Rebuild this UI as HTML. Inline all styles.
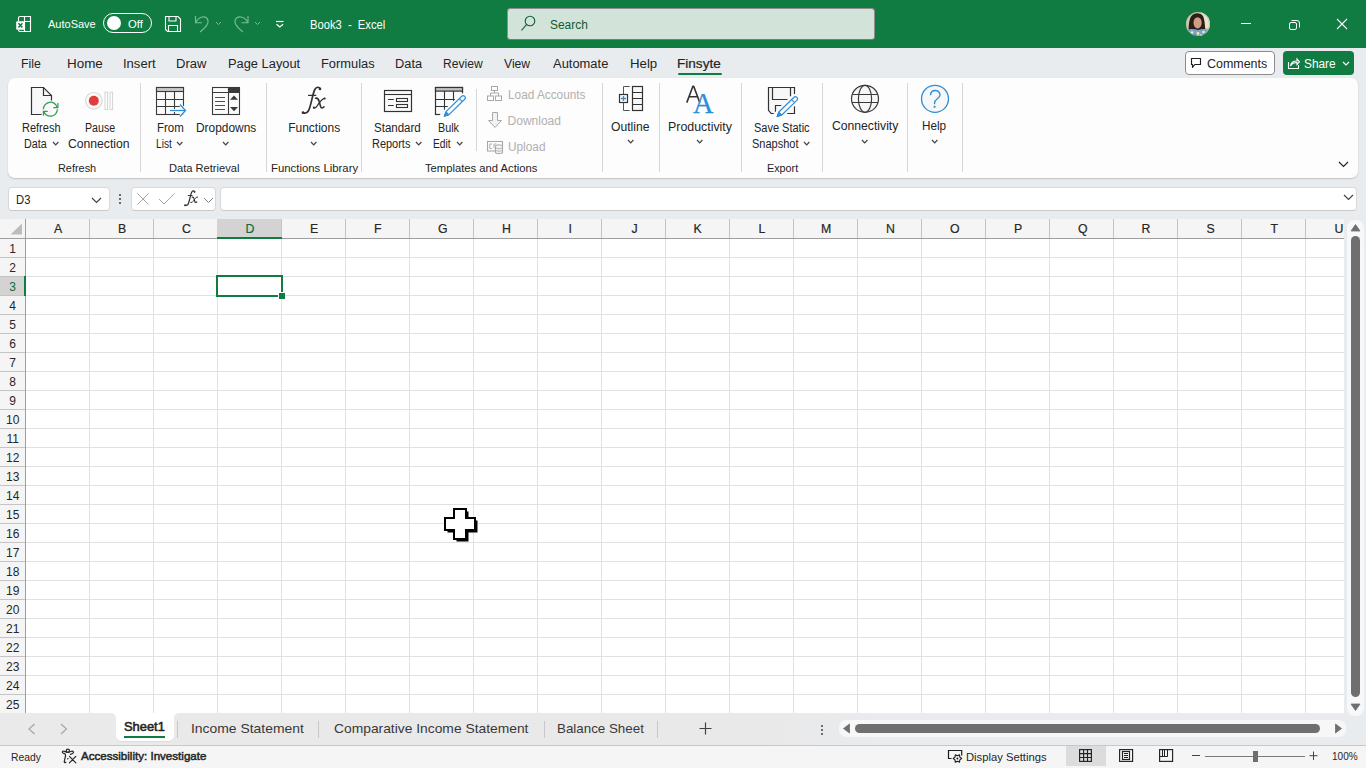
<!DOCTYPE html>
<html><head><meta charset="utf-8"><style>
html,body{margin:0;padding:0;width:1366px;height:768px;overflow:hidden;background:#e9ecef;font-family:"Liberation Sans", sans-serif;}
.t{position:absolute;line-height:1;white-space:pre;}
svg{overflow:visible}
</style></head><body>
<div style="position:absolute;left:0px;top:0px;width:1366px;height:48px;background:#107C41"></div>
<svg style="position:absolute;left:15px;top:15px;" width="18" height="18" viewBox="0 0 18 18"><g fill="none" stroke="#fff" stroke-width="1.15"><path d="M3.5 6 V3 Q3.5 1.5 5 1.5 H15.5 V16.5 H5 Q3.5 16.5 3.5 15"/><path d="M9.5 1.5 V16.5 M9.5 6.5 H15.5"/></g><rect x="1.2" y="6.2" width="8.6" height="8.5" rx="1.2" fill="#fff"/><path d="M3.4 8.3 L7.4 12.6 M7.4 8.3 L3.4 12.6" stroke="#107C41" stroke-width="1.5"/></svg>
<div style="position:absolute;left:103px;top:13px;width:47px;height:18px;border:1.2px solid #fff;border-radius:10px"></div>
<div style="position:absolute;left:107px;top:16px;width:14px;height:14px;border-radius:50%;background:#fff"></div>
<svg style="position:absolute;left:164px;top:15px;" width="18" height="18" viewBox="0 0 18 18"><g fill="none" stroke="#fff" stroke-width="1.1"><path d="M1.5 1.5 H14 L16.5 4 V16.5 H3.5 L1.5 14.5 Z"/><path d="M5 1.5 V6 H12 V1.5"/><path d="M4.5 16.5 V10.5 H13.5 V16.5"/></g></svg>
<svg style="position:absolute;left:188px;top:10px;" width="30" height="26" viewBox="0 0 30 26"><g fill="none" stroke="#7dba98" stroke-width="1.15" stroke-linejoin="miter"><path d="M7.5 6 V12.7 H14"/><path d="M8 12.2 C11 6 18.5 5 20 10.5 C21 14.5 17 18 12 22"/></g></svg>
<svg style="position:absolute;left:215.0px;top:21.0px;" width="7" height="4.6" viewBox="0 0 7 4.6"><path d="M1 1 L3.5 3.6 L6 1" fill="none" stroke="#7dba98" stroke-width="1"/></svg>
<svg style="position:absolute;left:227px;top:10px;" width="30" height="26" viewBox="0 0 30 26"><g fill="none" stroke="#7dba98" stroke-width="1.15" stroke-linejoin="miter"><path d="M21 6 V12.7 H14.5"/><path d="M20.5 12.2 C17.5 6 10 5 8 10.5 C7 14.5 11 18 16 22"/></g></svg>
<svg style="position:absolute;left:254.10000000000002px;top:21.0px;" width="7" height="4.6" viewBox="0 0 7 4.6"><path d="M1 1 L3.5 3.6 L6 1" fill="none" stroke="#7dba98" stroke-width="1"/></svg>
<svg style="position:absolute;left:275px;top:19px;" width="10" height="10" viewBox="0 0 10 10"><g fill="none" stroke="#fff" stroke-width="1.2"><path d="M1 2.5 H8.5"/><path d="M1.5 5.2 L4.8 8 L8.1 5.2"/></g></svg>
<div style="position:absolute;left:507px;top:8px;width:366px;height:30px;background:#d2e4da;border:1px solid #8e8e8e;border-bottom-color:#7a7a7a;border-radius:3.5px"></div>
<svg style="position:absolute;left:519px;top:14px;" width="18" height="18" viewBox="0 0 18 18"><g fill="none" stroke="#0e5c30" stroke-width="1.1"><circle cx="11" cy="7" r="4.8"/><path d="M7.6 10.4 L2.5 16.5"/></g></svg>
<svg style="position:absolute;left:1186px;top:12px;" width="24" height="24" viewBox="0 0 24 24"><defs><clipPath id="av"><circle cx="12" cy="12" r="12"/></clipPath></defs><g clip-path="url(#av)"><rect width="24" height="24" fill="#d9c9a8"/><rect x="15" y="0" width="9" height="16" fill="#ece3cc"/><path d="M3 24 C2 14 3 5 7 2.5 C10 0.5 15 1 17 4 C19 8 19 16 20 24 Z" fill="#2b1e19"/><ellipse cx="11.6" cy="10.8" rx="4.1" ry="5.6" fill="#cf9c84"/><path d="M0 19 C4 16 8 17 12 18 C16 17 20 16 24 19 V24 H0 Z" fill="#7fa3c2"/><circle cx="6" cy="20.5" r="1.3" fill="#e8eef2"/><circle cx="12" cy="21.5" r="1.4" fill="#f0e6b0"/><circle cx="17.5" cy="20" r="1.2" fill="#e8eef2"/><circle cx="9" cy="23" r="1.1" fill="#3d6a8e"/><circle cx="15" cy="23.2" r="1" fill="#e8eef2"/></g><circle cx="12" cy="12" r="11.6" fill="none" stroke="#9fb8a6" stroke-width="0.6"/></svg>
<div style="position:absolute;left:1241px;top:23px;width:10px;height:1px;background:#fff"></div>
<svg style="position:absolute;left:1289px;top:20px;" width="12" height="11" viewBox="0 0 12 11"><g fill="none" stroke="#fff" stroke-width="1"><rect x="0.5" y="2.5" width="7" height="7" rx="1.5"/><path d="M2.5 0.5 H8 Q10.5 0.5 10.5 3 V7.5"/></g></svg>
<svg style="position:absolute;left:1336px;top:18px;" width="12" height="12" viewBox="0 0 12 12"><g stroke="#fff" stroke-width="1.1"><path d="M1 1 L11 11 M11 1 L1 11"/></g></svg>
<div style="position:absolute;left:678px;top:73px;width:44px;height:2px;background:#107C41;border-radius:1px"></div>
<div style="position:absolute;left:1185px;top:51px;width:88px;height:22px;background:#fff;border:1px solid #8c8c8c;border-radius:4px"></div>
<svg style="position:absolute;left:1190px;top:57px;" width="13" height="12" viewBox="0 0 13 12"><path d="M1.5 1.5 H10.5 V7.5 H4.8 L2.5 10.3 V7.5 H1.5 Z" fill="none" stroke="#1e1e1e" stroke-width="1.15" stroke-linejoin="round"/></svg>
<div style="position:absolute;left:1283px;top:51px;width:71px;height:24px;background:#107C41;border-radius:4px"></div>
<svg style="position:absolute;left:1287px;top:57px;" width="13" height="13" viewBox="0 0 13 13"><g fill="none" stroke="#fff" stroke-width="1.1"><path d="M1.5 5 V11.5 H11.5 V8"/><path d="M3.5 9 C4 5 7 4 10 4 V2 L12.5 4.8 L10 7.5 V5.5 C7.5 5.5 5 6.5 3.5 9 Z"/></g></svg>
<svg style="position:absolute;left:1342.4px;top:61.2px;" width="8" height="5" viewBox="0 0 8 5"><path d="M1 1 L4.0 4 L7 1" fill="none" stroke="#fff" stroke-width="1.2"/></svg>
<div style="position:absolute;left:8px;top:78px;width:1350px;height:100px;background:#fdfdfd;border-radius:7px;box-shadow:0 1px 1.5px rgba(0,0,0,0.18)"></div>
<div style="position:absolute;left:140px;top:83px;width:1px;height:89px;background:#d6d6d6"></div>
<div style="position:absolute;left:266px;top:83px;width:1px;height:89px;background:#d6d6d6"></div>
<div style="position:absolute;left:361px;top:83px;width:1px;height:89px;background:#d6d6d6"></div>
<div style="position:absolute;left:602px;top:83px;width:1px;height:89px;background:#d6d6d6"></div>
<div style="position:absolute;left:659px;top:83px;width:1px;height:89px;background:#d6d6d6"></div>
<div style="position:absolute;left:741px;top:83px;width:1px;height:89px;background:#d6d6d6"></div>
<div style="position:absolute;left:822px;top:83px;width:1px;height:89px;background:#d6d6d6"></div>
<div style="position:absolute;left:907px;top:83px;width:1px;height:89px;background:#d6d6d6"></div>
<div style="position:absolute;left:962px;top:83px;width:1px;height:89px;background:#d6d6d6"></div>
<div style="position:absolute;left:476px;top:89px;width:1px;height:62px;background:#d6d6d6"></div>
<svg style="position:absolute;left:30px;top:86px;" width="32" height="32" viewBox="0 0 32 32"><path d="M1.5 1.5 H13.5 L21.5 9.5 V28.5 H1.5 Z" fill="#f7f7f9"/><path d="M21.5 14.5 V9.5 L13.5 1.5 H1.5 V28.5 H11.5" fill="none" stroke="#333" stroke-width="1.2"/><path d="M13.5 1.5 V9.5 H21.5" fill="none" stroke="#333" stroke-width="1.2"/><g fill="none" stroke="#2e9e58" stroke-width="1.25"><path d="M13.4 23.2 A7 7 0 0 1 27.16 21.39"/><path d="M27.4 23.2 A7 7 0 0 1 13.64 25"/><path d="M27.9 17 V21.5 H23.2"/><path d="M13.4 29.8 V25.4 H17.8"/></g></svg>
<svg style="position:absolute;left:51.5px;top:140.79999999999998px;" width="7.4" height="4.8" viewBox="0 0 7.4 4.8"><path d="M1 1 L3.7 3.8 L6.4 1" fill="none" stroke="#424242" stroke-width="1.2"/></svg>
<svg style="position:absolute;left:84px;top:91px;" width="32" height="20" viewBox="0 0 32 20"><circle cx="9.8" cy="9.8" r="8.3" fill="#fafafa" stroke="#d8d8d8" stroke-width="1.2"/><circle cx="9.8" cy="9.8" r="5" fill="#e03c3c"/><rect x="21" y="1.2" width="2.6" height="17.4" fill="none" stroke="#d0d0d0" stroke-width="0.9"/><rect x="26" y="1.2" width="2.6" height="17.4" fill="none" stroke="#d0d0d0" stroke-width="0.9"/></svg>
<svg style="position:absolute;left:155px;top:86px;" width="32" height="32" viewBox="0 0 32 32"><rect x="1.5" y="1.5" width="27" height="27" fill="#fafafa" stroke="#3a3a3a" stroke-width="1.1"/><rect x="1.5" y="1.5" width="27" height="4" fill="#c8c8c8" stroke="#3a3a3a" stroke-width="1.1"/><g stroke="#3a3a3a" stroke-width="1.1"><path d="M10.5 5.5 V28.5 M19.5 5.5 V28.5 M1.5 13.5 H28.5 M1.5 20.5 H28.5"/></g><g fill="none" stroke="#fdfdfd" stroke-width="3.2"><path d="M15 24.5 H30"/><path d="M25 18.5 L30.5 24.5 L25 30.5"/></g><g fill="none" stroke="#2e8fd8" stroke-width="1.3"><path d="M15 24.5 H30"/><path d="M25 18.5 L30.5 24.5 L25 30.5"/></g></svg>
<svg style="position:absolute;left:176.10000000000002px;top:140.9px;" width="7.4" height="4.8" viewBox="0 0 7.4 4.8"><path d="M1 1 L3.7 3.8 L6.4 1" fill="none" stroke="#424242" stroke-width="1.2"/></svg>
<svg style="position:absolute;left:211px;top:86px;" width="32" height="32" viewBox="0 0 32 32"><rect x="1.5" y="1.5" width="27" height="27" fill="#fafafa" stroke="#3a3a3a" stroke-width="1.1"/><rect x="17.5" y="1.5" width="11" height="5" fill="#3a3a3a"/><g stroke="#3a3a3a" stroke-width="1.1"><path d="M17.5 1.5 V28.5 M1.5 6.5 H28.5"/><path d="M4 11.5 H14 M4 15.5 H14 M4 19.5 H14 M4 23.5 H14" stroke-width="0.9"/></g><path d="M19 13.8 L23 9.6 L27 13.8 Z M19 21 L23 25.2 L27 21 Z" fill="#3a3a3a"/></svg>
<svg style="position:absolute;left:221.8px;top:140.9px;" width="7.4" height="4.8" viewBox="0 0 7.4 4.8"><path d="M1 1 L3.7 3.8 L6.4 1" fill="none" stroke="#424242" stroke-width="1.2"/></svg>
<svg style="position:absolute;left:294px;top:82px;" width="36" height="36" viewBox="0 0 36 36"><g fill="none" stroke="#303030" stroke-linecap="round"><path d="M26 6.9 C25.2 4.6 22.4 4.6 20.8 7.5 C19 11 17.6 20 15.6 26 C14.6 29.5 12.6 31.6 9.6 30.9" stroke-width="1.7"/><path d="M14.6 13.4 H21.8" stroke-width="1.2"/><path d="M21.6 16.2 C23.6 15.8 24.6 17 25.2 19.5 L26.6 24.6 C27.1 26.3 28.6 26.4 30 24.8" stroke-width="1.6"/><path d="M30.6 16.4 C28.4 16.4 25 21 22.6 24.6 C21.8 25.8 20.6 26.2 19.8 25.8" stroke-width="1.1"/></g><circle cx="26" cy="6.9" r="1.35" fill="#303030"/><circle cx="9" cy="30.7" r="1.35" fill="#303030"/><circle cx="30.6" cy="16.5" r="1.1" fill="#303030"/><circle cx="19.9" cy="25.7" r="1.1" fill="#303030"/></svg>
<svg style="position:absolute;left:309.7px;top:140.9px;" width="7.4" height="4.8" viewBox="0 0 7.4 4.8"><path d="M1 1 L3.7 3.8 L6.4 1" fill="none" stroke="#424242" stroke-width="1.2"/></svg>
<svg style="position:absolute;left:383px;top:89px;" width="30" height="24" viewBox="0 0 30 24"><rect x="1.5" y="1.5" width="27" height="21" fill="#fafafa" stroke="#333" stroke-width="1.2"/><g fill="none" stroke="#333" stroke-width="1.1"><path d="M1.5 5.5 H28.5"/><path d="M5 10.5 H10.8 M5 16.5 H10.8"/><rect x="13.5" y="9.5" width="11" height="3"/><rect x="13.5" y="15.5" width="11" height="3"/></g></svg>
<svg style="position:absolute;left:414.5px;top:140.9px;" width="7.4" height="4.8" viewBox="0 0 7.4 4.8"><path d="M1 1 L3.7 3.8 L6.4 1" fill="none" stroke="#424242" stroke-width="1.2"/></svg>
<svg style="position:absolute;left:434px;top:86px;" width="32" height="32" viewBox="0 0 32 32"><rect x="1.5" y="1.5" width="27" height="27" fill="#fafafa" stroke="#333" stroke-width="1.2"/><rect x="1.5" y="1.5" width="27" height="3.6" fill="#c4c4c4" stroke="#333" stroke-width="1.2"/><g stroke="#333" stroke-width="1.1"><path d="M10.5 5 V28.5 M19.5 5 V28.5 M1.5 13.5 H28.5 M1.5 20.5 H28.5"/></g><path d="M10.30 30.30 L29.20 11.80" stroke="#fdfdfd" stroke-width="9" stroke-linecap="round"/><path d="M12 32 L31 13 V32 Z" fill="#fdfdfd"/><path d="M10.30 30.30 L14.98 28.65 L30.67 13.30 A2.1 2.1 0 0 0 27.73 10.30 L12.05 25.65 Z" fill="#fafafa" stroke="#2e8fd8" stroke-width="1.2" stroke-linejoin="round"/><path d="M10.30 30.30 L14.98 28.65 L12.05 25.65 Z" fill="#2e8fd8" stroke="#2e8fd8" stroke-width="1" stroke-linejoin="round"/><path d="M28.38 15.54 L25.44 12.54" stroke="#2e8fd8" stroke-width="1.1"/></svg>
<svg style="position:absolute;left:455.6px;top:140.9px;" width="7.4" height="4.8" viewBox="0 0 7.4 4.8"><path d="M1 1 L3.7 3.8 L6.4 1" fill="none" stroke="#424242" stroke-width="1.2"/></svg>
<svg style="position:absolute;left:486px;top:85px;" width="17" height="17" viewBox="0 0 17 17"><g fill="none" stroke="#a8a8a8" stroke-width="1"><rect x="5.5" y="1.5" width="6" height="4"/><rect x="1.5" y="11" width="6" height="4.5"/><rect x="9.5" y="11" width="6" height="4.5"/><path d="M8.5 5.5 V8 M4.5 11 V8 H12.5 V11"/></g></svg>
<svg style="position:absolute;left:487px;top:111px;" width="16" height="18" viewBox="0 0 16 18"><path d="M5.5 1.5 H10.5 V9.5 H14.5 L8 16.5 L1.5 9.5 H5.5 Z" fill="#f2f2f2" stroke="#a8a8a8" stroke-width="1"/></svg>
<svg style="position:absolute;left:486px;top:140px;" width="18" height="15" viewBox="0 0 18 15"><rect x="1.5" y="1.5" width="15" height="9.5" fill="none" stroke="#a8a8a8" stroke-width="1.1"/><path d="M6 4 H3.8 V8.5 H6 M8 8.5 V4 H10.5" fill="none" stroke="#a8a8a8" stroke-width="0.9"/><path d="M9.5 5.5 Q13 4 16.5 5.5 V13 Q13 14.5 9.5 13 Z" fill="#f2f2f2" stroke="#a8a8a8" stroke-width="1"/><path d="M9.5 8 Q13 9.5 16.5 8 M9.5 10.5 Q13 12 16.5 10.5" fill="none" stroke="#a8a8a8" stroke-width="0.8"/></svg>
<svg style="position:absolute;left:612px;top:80px;" width="34" height="34" viewBox="0 0 34 34"><g fill="none" stroke="#555" stroke-width="1"><path d="M17.7 6.5 H11.5 V14 M11.5 22.7 V30.5 H17.7"/></g><g fill="none" stroke="#333" stroke-width="1.2"><rect x="20.5" y="6.5" width="10" height="24" fill="#f7f7f9"/><path d="M20.5 12.5 H30.5 M20.5 18.5 H30.5 M20.5 24.5 H30.5"/></g><rect x="7.5" y="14.5" width="8" height="8" fill="#fafafa" stroke="#333" stroke-width="1.2"/><path d="M11.5 16 V21 M9 18.5 H14" stroke="#2e8fd8" stroke-width="1.3"/></svg>
<svg style="position:absolute;left:626.5999999999999px;top:138.9px;" width="7.4" height="4.8" viewBox="0 0 7.4 4.8"><path d="M1 1 L3.7 3.8 L6.4 1" fill="none" stroke="#424242" stroke-width="1.2"/></svg>
<svg style="position:absolute;left:684px;top:84px;" width="20" height="22" viewBox="0 0 20 22"><path d="M2.8 18.6 L8.9 2.2 H9.7 L15.8 18.6 M5.2 12.8 H13.4" fill="none" stroke="#333" stroke-width="1.6" stroke-linejoin="round"/></svg>
<div class="t" style="left:693.2px;top:88.6px;font-family:'Liberation Serif',serif;font-weight:400;font-size:29px;color:#2e8fd8;-webkit-text-stroke:0.25px #2e8fd8;line-height:1;transform:scaleX(0.98);transform-origin:0 0">A</div>
<svg style="position:absolute;left:695.5999999999999px;top:138.9px;" width="7.4" height="4.8" viewBox="0 0 7.4 4.8"><path d="M1 1 L3.7 3.8 L6.4 1" fill="none" stroke="#424242" stroke-width="1.2"/></svg>
<svg style="position:absolute;left:766px;top:86px;" width="34" height="34" viewBox="0 0 34 34"><path d="M2.5 1.5 H28.5 V27.5 H5.1 L2.5 24.4 Z" fill="#f7f7f9" stroke="none"/><path d="M28.5 8 V1.5 H2.5 V24.4 L5.1 27.5 H9.5 M21.2 27.5 H28.5 V20.2" fill="none" stroke="#333" stroke-width="1.2"/><path d="M6.5 1.5 V13.5 H21.5 M24.5 1.5 V10.3" fill="none" stroke="#333" stroke-width="1.2"/><path d="M9.5 27.5 V19.5 H15.3" fill="none" stroke="#333" stroke-width="1.2"/><path d="M11.10 30.60 L29.40 12.80" stroke="#fdfdfd" stroke-width="9" stroke-linecap="round"/><path d="M11.10 30.60 L15.79 28.97 L30.86 14.31 A2.1 2.1 0 0 0 27.94 11.29 L12.86 25.96 Z" fill="#fafafa" stroke="#2e8fd8" stroke-width="1.2" stroke-linejoin="round"/><path d="M11.10 30.60 L15.79 28.97 L12.86 25.96 Z" fill="#2e8fd8" stroke="#2e8fd8" stroke-width="1" stroke-linejoin="round"/><path d="M28.57 16.54 L25.64 13.53" stroke="#2e8fd8" stroke-width="1.1"/></svg>
<svg style="position:absolute;left:803.0999999999999px;top:140.9px;" width="7.4" height="4.8" viewBox="0 0 7.4 4.8"><path d="M1 1 L3.7 3.8 L6.4 1" fill="none" stroke="#424242" stroke-width="1.2"/></svg>
<svg style="position:absolute;left:850px;top:84px;" width="30" height="30" viewBox="0 0 30 30"><g fill="none" stroke="#3a3a3a" stroke-width="1.2"><circle cx="15" cy="14.8" r="13.5" fill="#f7f7f7"/><ellipse cx="15" cy="14.8" rx="6.6" ry="13.5"/><path d="M2.3 10.5 H27.7 M2.3 18.5 H27.7"/></g></svg>
<svg style="position:absolute;left:860.6999999999999px;top:138.79999999999998px;" width="7.4" height="4.8" viewBox="0 0 7.4 4.8"><path d="M1 1 L3.7 3.8 L6.4 1" fill="none" stroke="#424242" stroke-width="1.2"/></svg>
<svg style="position:absolute;left:920px;top:84px;" width="30" height="30" viewBox="0 0 30 30"><circle cx="15" cy="14.8" r="13.5" fill="#f7f7f7" stroke="#2e8fd8" stroke-width="1.3"/><path d="M10.6 11.3 C10.6 5 20 5 20 11 C20 14.6 14.6 15 14.6 18.8 V20.2" fill="none" stroke="#2e8fd8" stroke-width="1.35"/><circle cx="14.6" cy="22.8" r="1.1" fill="#2e8fd8"/></svg>
<svg style="position:absolute;left:930.6999999999999px;top:138.79999999999998px;" width="7.4" height="4.8" viewBox="0 0 7.4 4.8"><path d="M1 1 L3.7 3.8 L6.4 1" fill="none" stroke="#424242" stroke-width="1.2"/></svg>
<svg style="position:absolute;left:1338px;top:161px;" width="11" height="7" viewBox="0 0 11 7"><path d="M1 1 L5.5 5.5 L10 1" fill="none" stroke="#242424" stroke-width="1.2"/></svg>
<div style="position:absolute;left:8px;top:187px;width:102px;height:24px;background:#fff;border:1px solid #d9d9d9;border-bottom-color:#c9c9c9;border-radius:4px;box-sizing:border-box"></div>
<svg style="position:absolute;left:91px;top:197px;" width="11" height="7" viewBox="0 0 11 7"><path d="M1 1 L5.5 5.5 L10 1" fill="none" stroke="#424242" stroke-width="1.2"/></svg>
<div style="position:absolute;left:119px;top:194px;width:2px;height:2px;border-radius:1px;background:#424242"></div>
<div style="position:absolute;left:119px;top:198px;width:2px;height:2px;border-radius:1px;background:#424242"></div>
<div style="position:absolute;left:119px;top:202px;width:2px;height:2px;border-radius:1px;background:#424242"></div>
<div style="position:absolute;left:131px;top:187px;width:85px;height:24px;background:#fff;border:1px solid #d9d9d9;border-bottom-color:#c9c9c9;border-radius:4px;box-sizing:border-box"></div>
<svg style="position:absolute;left:136px;top:192px;" width="14" height="14" viewBox="0 0 14 14"><path d="M1.5 1.5 L12.5 12.5 M12.5 1.5 L1.5 12.5" stroke="#a6a6a6" stroke-width="1"/></svg>
<svg style="position:absolute;left:158px;top:192px;" width="18" height="14" viewBox="0 0 18 14"><path d="M1 7 L6 12 L16.5 1.5" fill="none" stroke="#a6a6a6" stroke-width="1"/></svg>
<svg style="position:absolute;left:179.5px;top:187.5px;" width="20" height="20" viewBox="0 0 20 20"><g transform="scale(0.56)"><g fill="none" stroke="#303030" stroke-linecap="round"><path d="M26 6.9 C25.2 4.6 22.4 4.6 20.8 7.5 C19 11 17.6 20 15.6 26 C14.6 29.5 12.6 31.6 9.6 30.9" stroke-width="2.2"/><path d="M14.6 13.4 H21.8" stroke-width="1.7"/><path d="M21.6 16.2 C23.6 15.8 24.6 17 25.2 19.5 L26.6 24.6 C27.1 26.3 28.6 26.4 30 24.8" stroke-width="2.1"/><path d="M30.6 16.4 C28.4 16.4 25 21 22.6 24.6 C21.8 25.8 20.6 26.2 19.8 25.8" stroke-width="1.5"/></g><circle cx="26" cy="6.9" r="1.7" fill="#303030"/><circle cx="9" cy="30.7" r="1.7" fill="#303030"/><circle cx="30.6" cy="16.5" r="1.1" fill="#303030"/><circle cx="19.9" cy="25.7" r="1.1" fill="#303030"/></g></svg>
<svg style="position:absolute;left:203px;top:196.5px;" width="11" height="7" viewBox="0 0 11 7"><path d="M1 1 L5.5 5.5 L10 1" fill="none" stroke="#8a8a8a" stroke-width="1"/></svg>
<div style="position:absolute;left:220px;top:187px;width:1137px;height:24px;background:#fff;border:1px solid #d9d9d9;border-bottom-color:#c9c9c9;border-radius:4px;box-sizing:border-box"></div>
<svg style="position:absolute;left:1343px;top:194px;" width="11" height="7" viewBox="0 0 11 7"><path d="M1 1 L5.5 5.5 L10 1" fill="none" stroke="#424242" stroke-width="1.2"/></svg>
<div style="position:absolute;left:0px;top:219px;width:1344px;height:20px;background:#f5f5f5"></div>
<div style="position:absolute;left:0px;top:239px;width:26px;height:474px;background:#f5f5f5"></div>
<div style="position:absolute;left:26px;top:239px;width:1318px;height:474px;background:#fff"></div>
<div style="position:absolute;left:89px;top:219px;width:1px;height:19px;background:#c4c4c4"></div>
<div style="position:absolute;left:89px;top:239px;width:1px;height:474px;background:#e1e1e1"></div>
<div style="position:absolute;left:153px;top:219px;width:1px;height:19px;background:#c4c4c4"></div>
<div style="position:absolute;left:153px;top:239px;width:1px;height:474px;background:#e1e1e1"></div>
<div style="position:absolute;left:217px;top:219px;width:1px;height:19px;background:#c4c4c4"></div>
<div style="position:absolute;left:217px;top:239px;width:1px;height:474px;background:#e1e1e1"></div>
<div style="position:absolute;left:281px;top:219px;width:1px;height:19px;background:#c4c4c4"></div>
<div style="position:absolute;left:281px;top:239px;width:1px;height:474px;background:#e1e1e1"></div>
<div style="position:absolute;left:345px;top:219px;width:1px;height:19px;background:#c4c4c4"></div>
<div style="position:absolute;left:345px;top:239px;width:1px;height:474px;background:#e1e1e1"></div>
<div style="position:absolute;left:409px;top:219px;width:1px;height:19px;background:#c4c4c4"></div>
<div style="position:absolute;left:409px;top:239px;width:1px;height:474px;background:#e1e1e1"></div>
<div style="position:absolute;left:473px;top:219px;width:1px;height:19px;background:#c4c4c4"></div>
<div style="position:absolute;left:473px;top:239px;width:1px;height:474px;background:#e1e1e1"></div>
<div style="position:absolute;left:537px;top:219px;width:1px;height:19px;background:#c4c4c4"></div>
<div style="position:absolute;left:537px;top:239px;width:1px;height:474px;background:#e1e1e1"></div>
<div style="position:absolute;left:601px;top:219px;width:1px;height:19px;background:#c4c4c4"></div>
<div style="position:absolute;left:601px;top:239px;width:1px;height:474px;background:#e1e1e1"></div>
<div style="position:absolute;left:665px;top:219px;width:1px;height:19px;background:#c4c4c4"></div>
<div style="position:absolute;left:665px;top:239px;width:1px;height:474px;background:#e1e1e1"></div>
<div style="position:absolute;left:729px;top:219px;width:1px;height:19px;background:#c4c4c4"></div>
<div style="position:absolute;left:729px;top:239px;width:1px;height:474px;background:#e1e1e1"></div>
<div style="position:absolute;left:793px;top:219px;width:1px;height:19px;background:#c4c4c4"></div>
<div style="position:absolute;left:793px;top:239px;width:1px;height:474px;background:#e1e1e1"></div>
<div style="position:absolute;left:857px;top:219px;width:1px;height:19px;background:#c4c4c4"></div>
<div style="position:absolute;left:857px;top:239px;width:1px;height:474px;background:#e1e1e1"></div>
<div style="position:absolute;left:921px;top:219px;width:1px;height:19px;background:#c4c4c4"></div>
<div style="position:absolute;left:921px;top:239px;width:1px;height:474px;background:#e1e1e1"></div>
<div style="position:absolute;left:985px;top:219px;width:1px;height:19px;background:#c4c4c4"></div>
<div style="position:absolute;left:985px;top:239px;width:1px;height:474px;background:#e1e1e1"></div>
<div style="position:absolute;left:1049px;top:219px;width:1px;height:19px;background:#c4c4c4"></div>
<div style="position:absolute;left:1049px;top:239px;width:1px;height:474px;background:#e1e1e1"></div>
<div style="position:absolute;left:1113px;top:219px;width:1px;height:19px;background:#c4c4c4"></div>
<div style="position:absolute;left:1113px;top:239px;width:1px;height:474px;background:#e1e1e1"></div>
<div style="position:absolute;left:1177px;top:219px;width:1px;height:19px;background:#c4c4c4"></div>
<div style="position:absolute;left:1177px;top:239px;width:1px;height:474px;background:#e1e1e1"></div>
<div style="position:absolute;left:1241px;top:219px;width:1px;height:19px;background:#c4c4c4"></div>
<div style="position:absolute;left:1241px;top:239px;width:1px;height:474px;background:#e1e1e1"></div>
<div style="position:absolute;left:1305px;top:219px;width:1px;height:19px;background:#c4c4c4"></div>
<div style="position:absolute;left:1305px;top:239px;width:1px;height:474px;background:#e1e1e1"></div>
<div style="position:absolute;left:0px;top:257px;width:25px;height:1px;background:#c4c4c4"></div>
<div style="position:absolute;left:26px;top:257px;width:1318px;height:1px;background:#e1e1e1"></div>
<div style="position:absolute;left:0px;top:276px;width:25px;height:1px;background:#c4c4c4"></div>
<div style="position:absolute;left:26px;top:276px;width:1318px;height:1px;background:#e1e1e1"></div>
<div style="position:absolute;left:0px;top:295px;width:25px;height:1px;background:#c4c4c4"></div>
<div style="position:absolute;left:26px;top:295px;width:1318px;height:1px;background:#e1e1e1"></div>
<div style="position:absolute;left:0px;top:314px;width:25px;height:1px;background:#c4c4c4"></div>
<div style="position:absolute;left:26px;top:314px;width:1318px;height:1px;background:#e1e1e1"></div>
<div style="position:absolute;left:0px;top:333px;width:25px;height:1px;background:#c4c4c4"></div>
<div style="position:absolute;left:26px;top:333px;width:1318px;height:1px;background:#e1e1e1"></div>
<div style="position:absolute;left:0px;top:352px;width:25px;height:1px;background:#c4c4c4"></div>
<div style="position:absolute;left:26px;top:352px;width:1318px;height:1px;background:#e1e1e1"></div>
<div style="position:absolute;left:0px;top:371px;width:25px;height:1px;background:#c4c4c4"></div>
<div style="position:absolute;left:26px;top:371px;width:1318px;height:1px;background:#e1e1e1"></div>
<div style="position:absolute;left:0px;top:390px;width:25px;height:1px;background:#c4c4c4"></div>
<div style="position:absolute;left:26px;top:390px;width:1318px;height:1px;background:#e1e1e1"></div>
<div style="position:absolute;left:0px;top:409px;width:25px;height:1px;background:#c4c4c4"></div>
<div style="position:absolute;left:26px;top:409px;width:1318px;height:1px;background:#e1e1e1"></div>
<div style="position:absolute;left:0px;top:428px;width:25px;height:1px;background:#c4c4c4"></div>
<div style="position:absolute;left:26px;top:428px;width:1318px;height:1px;background:#e1e1e1"></div>
<div style="position:absolute;left:0px;top:447px;width:25px;height:1px;background:#c4c4c4"></div>
<div style="position:absolute;left:26px;top:447px;width:1318px;height:1px;background:#e1e1e1"></div>
<div style="position:absolute;left:0px;top:466px;width:25px;height:1px;background:#c4c4c4"></div>
<div style="position:absolute;left:26px;top:466px;width:1318px;height:1px;background:#e1e1e1"></div>
<div style="position:absolute;left:0px;top:485px;width:25px;height:1px;background:#c4c4c4"></div>
<div style="position:absolute;left:26px;top:485px;width:1318px;height:1px;background:#e1e1e1"></div>
<div style="position:absolute;left:0px;top:504px;width:25px;height:1px;background:#c4c4c4"></div>
<div style="position:absolute;left:26px;top:504px;width:1318px;height:1px;background:#e1e1e1"></div>
<div style="position:absolute;left:0px;top:523px;width:25px;height:1px;background:#c4c4c4"></div>
<div style="position:absolute;left:26px;top:523px;width:1318px;height:1px;background:#e1e1e1"></div>
<div style="position:absolute;left:0px;top:542px;width:25px;height:1px;background:#c4c4c4"></div>
<div style="position:absolute;left:26px;top:542px;width:1318px;height:1px;background:#e1e1e1"></div>
<div style="position:absolute;left:0px;top:561px;width:25px;height:1px;background:#c4c4c4"></div>
<div style="position:absolute;left:26px;top:561px;width:1318px;height:1px;background:#e1e1e1"></div>
<div style="position:absolute;left:0px;top:580px;width:25px;height:1px;background:#c4c4c4"></div>
<div style="position:absolute;left:26px;top:580px;width:1318px;height:1px;background:#e1e1e1"></div>
<div style="position:absolute;left:0px;top:599px;width:25px;height:1px;background:#c4c4c4"></div>
<div style="position:absolute;left:26px;top:599px;width:1318px;height:1px;background:#e1e1e1"></div>
<div style="position:absolute;left:0px;top:618px;width:25px;height:1px;background:#c4c4c4"></div>
<div style="position:absolute;left:26px;top:618px;width:1318px;height:1px;background:#e1e1e1"></div>
<div style="position:absolute;left:0px;top:637px;width:25px;height:1px;background:#c4c4c4"></div>
<div style="position:absolute;left:26px;top:637px;width:1318px;height:1px;background:#e1e1e1"></div>
<div style="position:absolute;left:0px;top:656px;width:25px;height:1px;background:#c4c4c4"></div>
<div style="position:absolute;left:26px;top:656px;width:1318px;height:1px;background:#e1e1e1"></div>
<div style="position:absolute;left:0px;top:675px;width:25px;height:1px;background:#c4c4c4"></div>
<div style="position:absolute;left:26px;top:675px;width:1318px;height:1px;background:#e1e1e1"></div>
<div style="position:absolute;left:0px;top:694px;width:25px;height:1px;background:#c4c4c4"></div>
<div style="position:absolute;left:26px;top:694px;width:1318px;height:1px;background:#e1e1e1"></div>
<div style="position:absolute;left:0px;top:238px;width:1344px;height:1px;background:#9e9e9e"></div>
<div style="position:absolute;left:25px;top:219px;width:1px;height:494px;background:#9e9e9e"></div>
<svg style="position:absolute;left:10px;top:223px;" width="13" height="12" viewBox="0 0 13 12"><path d="M12 0.5 V11.5 H0.5 Z" fill="#bcbcbc"/></svg>
<div style="position:absolute;left:217px;top:219px;width:64px;height:19px;background:#d3d3d3"></div>
<div style="position:absolute;left:217px;top:237px;width:65px;height:2px;background:#107C41"></div>
<div style="position:absolute;left:0px;top:277px;width:25px;height:18px;background:#d3d3d3"></div>
<div style="position:absolute;left:24px;top:276px;width:2px;height:20px;background:#107C41"></div>
<div style="position:absolute;left:216px;top:275px;width:67px;height:22px;border:2px solid #107C41;box-sizing:border-box"></div>
<div style="position:absolute;left:278px;top:292px;width:6px;height:6px;background:#107C41;border-left:1px solid #fff;border-top:1px solid #fff"></div>
<svg style="position:absolute;left:443px;top:507px;" width="38" height="38" viewBox="0 0 38 38"><path d="M13.5 4.5 H25.5 V13.5 H34.5 V25.5 H25.5 V34.5 H13.5 V25.5 H4.5 V13.5 H13.5 Z" fill="#000"/><path d="M11 2 H23 V11 H32 V23 H23 V32 H11 V23 H2 V11 H11 Z" fill="#fff" stroke="#000" stroke-width="2" stroke-linejoin="miter"/></svg>
<div style="position:absolute;left:0px;top:713px;width:1344px;height:32px;background:#fff"></div>
<div style="position:absolute;left:1344px;top:713px;width:22px;height:32px;background:#e9ecef"></div>
<div style="position:absolute;left:0px;top:713px;width:116px;height:32px;background:#eaeaea;border-radius:0 5px 0 0"></div>
<div style="position:absolute;left:110px;top:730px;width:70px;height:15px;background:#eaeaea"></div>
<div style="position:absolute;left:116px;top:713px;width:58px;height:28px;background:#fff;border-radius:0 0 5px 5px;box-shadow:0 0.5px 0.5px rgba(0,0,0,0.12)"></div>
<div style="position:absolute;left:174px;top:713px;width:1172px;height:32px;background:linear-gradient(90deg,#eae9e9 0px,#eae9e9 580px,#e9ebee 700px);border-radius:5px 0 0 0"></div>
<div style="position:absolute;left:1344px;top:219px;width:22px;height:526px;background:#e9ecef"></div>
<div style="position:absolute;left:1347px;top:220px;width:17px;height:496px;background:#f7f8f9;border-radius:8px"></div>
<svg style="position:absolute;left:1350px;top:223px;" width="11" height="9" viewBox="0 0 11 9"><path d="M1 8 L5.5 1.5 L10 8 Z" fill="#6f6f6f" stroke="#6f6f6f" stroke-width="0.8" stroke-linejoin="round"/></svg>
<div style="position:absolute;left:1351px;top:236px;width:9px;height:461px;background:#6f6f6f;border-radius:4.5px"></div>
<svg style="position:absolute;left:1350px;top:703px;" width="11" height="9" viewBox="0 0 11 9"><path d="M1 1 L5.5 7.5 L10 1 Z" fill="#6f6f6f" stroke="#6f6f6f" stroke-width="0.8" stroke-linejoin="round"/></svg>
<svg style="position:absolute;left:27px;top:723px;" width="10" height="12" viewBox="0 0 10 12"><path d="M7.5 1 L2 6 L7.5 11" fill="none" stroke="#a6a6a6" stroke-width="1.2"/></svg>
<svg style="position:absolute;left:59px;top:723px;" width="10" height="12" viewBox="0 0 10 12"><path d="M2 1 L7.5 6 L2 11" fill="none" stroke="#a6a6a6" stroke-width="1.2"/></svg>
<div style="position:absolute;left:124px;top:736px;width:41px;height:2px;background:#107C41"></div>
<div style="position:absolute;left:177px;top:721px;width:1px;height:17px;background:#c8c8c8"></div>
<div style="position:absolute;left:318px;top:721px;width:1px;height:17px;background:#c8c8c8"></div>
<div style="position:absolute;left:544px;top:721px;width:1px;height:17px;background:#c8c8c8"></div>
<div style="position:absolute;left:657px;top:721px;width:1px;height:17px;background:#c8c8c8"></div>
<svg style="position:absolute;left:699px;top:722px;" width="13" height="13" viewBox="0 0 13 13"><path d="M6.5 0.5 V12.5 M0.5 6.5 H12.5" stroke="#424242" stroke-width="1.2"/></svg>
<div style="position:absolute;left:821px;top:725px;width:2px;height:2px;border-radius:1px;background:#424242"></div>
<div style="position:absolute;left:821px;top:729px;width:2px;height:2px;border-radius:1px;background:#424242"></div>
<div style="position:absolute;left:821px;top:733px;width:2px;height:2px;border-radius:1px;background:#424242"></div>
<div style="position:absolute;left:839px;top:720px;width:507px;height:17px;background:#f7f7f8;border-radius:7px"></div>
<svg style="position:absolute;left:842px;top:723px;" width="9" height="11" viewBox="0 0 9 11"><path d="M7.5 1 L1.5 5.5 L7.5 10 Z" fill="#6f6f6f" stroke="#6f6f6f" stroke-width="0.8" stroke-linejoin="round"/></svg>
<div style="position:absolute;left:855px;top:724px;width:465px;height:9px;background:#6f6f6f;border-radius:4.5px"></div>
<svg style="position:absolute;left:1334px;top:723px;" width="9" height="11" viewBox="0 0 9 11"><path d="M1.5 1 L7.5 5.5 L1.5 10 Z" fill="#6f6f6f" stroke="#6f6f6f" stroke-width="0.8" stroke-linejoin="round"/></svg>
<div style="position:absolute;left:0px;top:745px;width:1366px;height:23px;background:#f5f5f6;border-top:1px solid #c8c8c8;box-sizing:border-box"></div>
<svg style="position:absolute;left:56px;top:746px;" width="24" height="20" viewBox="0 0 24 20"><g fill="none" stroke="#262626" stroke-width="1.2" stroke-linecap="round"><circle cx="11.85" cy="4.8" r="1.6"/><path d="M9.9 16.2 C9.3 17 8 16.8 8.3 15.5 C8.7 13.3 9.6 10.5 9.6 8.8 C9.5 7.8 7.8 7.5 6.9 6.9 C5.6 6 6.6 4.6 8.2 5.2 C9.6 5.8 10.6 6.3 11.85 6.3 C13.1 6.3 14.2 5.8 15.5 5.2 C17 4.6 18.2 6 17 7.2 C16.4 7.8 15.4 8.1 14.4 8.3"/><path d="M13.4 10.4 L19.8 16.8 M19.8 10.4 L13.4 16.8"/></g><circle cx="11.8" cy="12.7" r="0.8" fill="#262626"/></svg>
<svg style="position:absolute;left:944px;top:746px;" width="20" height="20" viewBox="0 0 20 20"><g fill="none" stroke="#1e1e1e" stroke-width="1.2"><path d="M17.7 9.6 V4.5 H4.5 V12.5 H7.6"/></g><path d="M17.60 12.50 L15.82 11.10 L15.50 8.86 L13.40 9.70 L11.30 8.86 L10.98 11.10 L9.20 12.50 L10.98 13.90 L11.30 16.14 L13.40 15.30 L15.50 16.14 L15.82 13.90 Z" fill="#f5f5f6" stroke="#1e1e1e" stroke-width="1.15" stroke-linejoin="round"/><circle cx="13.4" cy="12.5" r="1" fill="#1e1e1e"/></svg>
<div style="position:absolute;left:1066px;top:746px;width:40px;height:20px;background:#dcdcdc"></div>
<svg style="position:absolute;left:1079px;top:749px;" width="14" height="14" viewBox="0 0 14 14"><g fill="none" stroke="#222" stroke-width="1.15"><rect x="0.6" y="0.6" width="11.8" height="11.8"/><path d="M4.6 0.6 V12.4 M8.5 0.6 V12.4 M0.6 4.6 H12.4 M0.6 8.5 H12.4"/></g></svg>
<svg style="position:absolute;left:1119px;top:749px;" width="15" height="14" viewBox="0 0 15 14"><g fill="none" stroke="#222" stroke-width="1.15"><rect x="0.6" y="0.6" width="13" height="11.8"/><rect x="3.5" y="2.5" width="7" height="8"/><path d="M5 4.5 H9 M5 6.5 H9 M5 8.5 H9" stroke-width="1"/></g></svg>
<svg style="position:absolute;left:1159px;top:749px;" width="15" height="14" viewBox="0 0 15 14"><g fill="none" stroke="#222" stroke-width="1.15"><rect x="0.6" y="0.6" width="13" height="11.8"/><path d="M0.6 7.5 H8.5 V0.6 M3.5 0.6 V7.5 M5.5 0.6 V7.5" stroke-width="1"/></g></svg>
<div style="position:absolute;left:1192px;top:755px;width:8px;height:1px;background:#424242"></div>
<div style="position:absolute;left:1205px;top:756px;width:100px;height:1px;background:#7a7a7a"></div>
<div style="position:absolute;left:1253px;top:751px;width:5px;height:11px;background:#6e6e6e"></div>
<svg style="position:absolute;left:1309px;top:751px;" width="10" height="10" viewBox="0 0 10 10"><path d="M4.5 0.5 V9 M0.5 4.7 H8.5" stroke="#424242" stroke-width="1"/></svg>
<div class="t" style="left:48.00px;top:19.29px;font-size:11px;color:#fff;font-weight:400;">AutoSave</div>
<div class="t" style="left:127.60px;top:19.29px;font-size:11px;color:#fff;font-weight:400;transform:scaleX(1.0251);transform-origin:0 0;">Off</div>
<div class="t" style="left:309.70px;top:18.94px;font-size:12px;color:#fff;font-weight:400;transform:scaleX(0.9321);transform-origin:0 0;">Book3  -  Excel</div>
<div class="t" style="left:549.60px;top:18.72px;font-size:12.5px;color:#0e5c30;font-weight:400;transform:scaleX(0.9533);transform-origin:0 0;">Search</div>
<div class="t" style="left:21.02px;top:57.82px;font-size:12.5px;color:#242424;font-weight:400;transform:scaleX(0.9849);transform-origin:0 0;">File</div>
<div class="t" style="left:66.93px;top:57.82px;font-size:12.5px;color:#242424;font-weight:400;transform:scaleX(1.0744);transform-origin:0 0;">Home</div>
<div class="t" style="left:122.86px;top:57.82px;font-size:12.5px;color:#242424;font-weight:400;transform:scaleX(1.0426);transform-origin:0 0;">Insert</div>
<div class="t" style="left:175.96px;top:57.82px;font-size:12.5px;color:#242424;font-weight:400;transform:scaleX(1.0432);transform-origin:0 0;">Draw</div>
<div class="t" style="left:227.77px;top:57.82px;font-size:12.5px;color:#242424;font-weight:400;transform:scaleX(1.0283);transform-origin:0 0;">Page Layout</div>
<div class="t" style="left:321.27px;top:57.82px;font-size:12.5px;color:#242424;font-weight:400;transform:scaleX(1.0286);transform-origin:0 0;">Formulas</div>
<div class="t" style="left:395.07px;top:57.82px;font-size:12.5px;color:#242424;font-weight:400;transform:scaleX(1.0255);transform-origin:0 0;">Data</div>
<div class="t" style="left:443.43px;top:57.82px;font-size:12.5px;color:#242424;font-weight:400;transform:scaleX(0.9668);transform-origin:0 0;">Review</div>
<div class="t" style="left:503.70px;top:57.82px;font-size:12.5px;color:#242424;font-weight:400;transform:scaleX(0.9734);transform-origin:0 0;">View</div>
<div class="t" style="left:552.90px;top:57.82px;font-size:12.5px;color:#242424;font-weight:400;transform:scaleX(1.0345);transform-origin:0 0;">Automate</div>
<div class="t" style="left:630.24px;top:57.82px;font-size:12.5px;color:#242424;font-weight:400;transform:scaleX(1.0583);transform-origin:0 0;">Help</div>
<div class="t" style="left:677.31px;top:57.82px;font-size:12.5px;color:#242424;font-weight:400;transform:scaleX(1.0855);transform-origin:0 0;-webkit-text-stroke:0.2px #242424;">Finsyte</div>
<div class="t" style="left:1206.90px;top:58.14px;font-size:12px;color:#242424;font-weight:400;transform:scaleX(1.0377);transform-origin:0 0;">Comments</div>
<div class="t" style="left:1304.30px;top:58.14px;font-size:12px;color:#fff;font-weight:400;transform:scaleX(0.9862);transform-origin:0 0;">Share</div>
<div class="t" style="left:22.30px;top:122.14px;font-size:12px;color:#242424;font-weight:400;transform:scaleX(0.9167);transform-origin:0 0;">Refresh</div>
<div class="t" style="left:24.40px;top:138.04px;font-size:12px;color:#242424;font-weight:400;transform:scaleX(0.8959);transform-origin:0 0;">Data</div>
<div class="t" style="left:84.60px;top:122.14px;font-size:12px;color:#242424;font-weight:400;transform:scaleX(0.8850);transform-origin:0 0;">Pause</div>
<div class="t" style="left:68.40px;top:138.04px;font-size:12px;color:#242424;font-weight:400;transform:scaleX(1.0144);transform-origin:0 0;">Connection</div>
<div class="t" style="left:57.50px;top:162.73px;font-size:11.3px;color:#242424;font-weight:400;transform:scaleX(0.9650);transform-origin:0 0;">Refresh</div>
<div class="t" style="left:156.60px;top:122.14px;font-size:12px;color:#242424;font-weight:400;transform:scaleX(0.9571);transform-origin:0 0;">From</div>
<div class="t" style="left:156.00px;top:138.04px;font-size:12px;color:#242424;font-weight:400;transform:scaleX(0.8480);transform-origin:0 0;">List</div>
<div class="t" style="left:195.60px;top:122.14px;font-size:12px;color:#242424;font-weight:400;transform:scaleX(0.9918);transform-origin:0 0;">Dropdowns</div>
<div class="t" style="left:168.60px;top:162.73px;font-size:11.3px;color:#242424;font-weight:400;transform:scaleX(0.9836);transform-origin:0 0;">Data Retrieval</div>
<div class="t" style="left:288.20px;top:122.14px;font-size:12px;color:#242424;font-weight:400;">Functions</div>
<div class="t" style="left:270.50px;top:162.73px;font-size:11.3px;color:#242424;font-weight:400;transform:scaleX(1.0058);transform-origin:0 0;">Functions Library</div>
<div class="t" style="left:374.30px;top:122.14px;font-size:12px;color:#242424;font-weight:400;transform:scaleX(0.9598);transform-origin:0 0;">Standard</div>
<div class="t" style="left:372.40px;top:138.04px;font-size:12px;color:#242424;font-weight:400;transform:scaleX(0.9139);transform-origin:0 0;">Reports</div>
<div class="t" style="left:437.80px;top:122.14px;font-size:12px;color:#242424;font-weight:400;transform:scaleX(0.8996);transform-origin:0 0;">Bulk</div>
<div class="t" style="left:433.20px;top:138.04px;font-size:12px;color:#242424;font-weight:400;transform:scaleX(0.8574);transform-origin:0 0;">Edit</div>
<div class="t" style="left:507.60px;top:89.24px;font-size:12px;color:#b0b0b0;font-weight:400;transform:scaleX(0.9838);transform-origin:0 0;">Load Accounts</div>
<div class="t" style="left:507.60px;top:115.04px;font-size:12px;color:#b0b0b0;font-weight:400;">Download</div>
<div class="t" style="left:507.60px;top:141.09px;font-size:12px;color:#b0b0b0;font-weight:400;transform:scaleX(0.9852);transform-origin:0 0;">Upload</div>
<div class="t" style="left:425.00px;top:162.73px;font-size:11.3px;color:#242424;font-weight:400;transform:scaleX(0.9947);transform-origin:0 0;">Templates and Actions</div>
<div class="t" style="left:611.40px;top:120.54px;font-size:12px;color:#242424;font-weight:400;transform:scaleX(1.0118);transform-origin:0 0;">Outline</div>
<div class="t" style="left:668.20px;top:120.54px;font-size:12px;color:#242424;font-weight:400;transform:scaleX(1.0319);transform-origin:0 0;">Productivity</div>
<div class="t" style="left:754.00px;top:122.24px;font-size:12px;color:#242424;font-weight:400;transform:scaleX(0.9160);transform-origin:0 0;">Save Static</div>
<div class="t" style="left:752.40px;top:137.94px;font-size:12px;color:#242424;font-weight:400;transform:scaleX(0.9168);transform-origin:0 0;">Snapshot</div>
<div class="t" style="left:766.70px;top:162.73px;font-size:11.3px;color:#242424;font-weight:400;transform:scaleX(0.9549);transform-origin:0 0;">Export</div>
<div class="t" style="left:831.50px;top:120.24px;font-size:12px;color:#242424;font-weight:400;transform:scaleX(1.0144);transform-origin:0 0;">Connectivity</div>
<div class="t" style="left:922.20px;top:120.24px;font-size:12px;color:#242424;font-weight:400;transform:scaleX(0.9758);transform-origin:0 0;">Help</div>
<div class="t" style="left:15.50px;top:194.14px;font-size:12px;color:#242424;font-weight:400;transform:scaleX(0.9383);transform-origin:0 0;">D3</div>
<div class="t" style="left:54.00px;top:222.89px;font-size:12.3px;color:#262626;font-weight:400;-webkit-text-stroke:0.2px #262626;">A</div>
<div class="t" style="left:118.00px;top:222.89px;font-size:12.3px;color:#262626;font-weight:400;-webkit-text-stroke:0.2px #262626;">B</div>
<div class="t" style="left:182.00px;top:222.89px;font-size:12.3px;color:#262626;font-weight:400;-webkit-text-stroke:0.2px #262626;">C</div>
<div class="t" style="left:245.50px;top:222.89px;font-size:12.3px;color:#0e6b3a;font-weight:400;-webkit-text-stroke:0.2px #0e6b3a;">D</div>
<div class="t" style="left:310.00px;top:222.89px;font-size:12.3px;color:#262626;font-weight:400;-webkit-text-stroke:0.2px #262626;">E</div>
<div class="t" style="left:374.00px;top:222.89px;font-size:12.3px;color:#262626;font-weight:400;-webkit-text-stroke:0.2px #262626;">F</div>
<div class="t" style="left:438.00px;top:222.89px;font-size:12.3px;color:#262626;font-weight:400;-webkit-text-stroke:0.2px #262626;">G</div>
<div class="t" style="left:502.00px;top:222.89px;font-size:12.3px;color:#262626;font-weight:400;-webkit-text-stroke:0.2px #262626;">H</div>
<div class="t" style="left:568.50px;top:222.89px;font-size:12.3px;color:#262626;font-weight:400;-webkit-text-stroke:0.2px #262626;">I</div>
<div class="t" style="left:631.50px;top:222.89px;font-size:12.3px;color:#262626;font-weight:400;-webkit-text-stroke:0.2px #262626;">J</div>
<div class="t" style="left:693.50px;top:222.89px;font-size:12.3px;color:#262626;font-weight:400;-webkit-text-stroke:0.2px #262626;">K</div>
<div class="t" style="left:758.50px;top:222.89px;font-size:12.3px;color:#262626;font-weight:400;-webkit-text-stroke:0.2px #262626;">L</div>
<div class="t" style="left:821.00px;top:222.89px;font-size:12.3px;color:#262626;font-weight:400;-webkit-text-stroke:0.2px #262626;">M</div>
<div class="t" style="left:886.00px;top:222.89px;font-size:12.3px;color:#262626;font-weight:400;-webkit-text-stroke:0.2px #262626;">N</div>
<div class="t" style="left:950.00px;top:222.89px;font-size:12.3px;color:#262626;font-weight:400;-webkit-text-stroke:0.2px #262626;">O</div>
<div class="t" style="left:1014.00px;top:222.89px;font-size:12.3px;color:#262626;font-weight:400;-webkit-text-stroke:0.2px #262626;">P</div>
<div class="t" style="left:1078.00px;top:222.89px;font-size:12.3px;color:#262626;font-weight:400;-webkit-text-stroke:0.2px #262626;">Q</div>
<div class="t" style="left:1141.50px;top:222.89px;font-size:12.3px;color:#262626;font-weight:400;-webkit-text-stroke:0.2px #262626;">R</div>
<div class="t" style="left:1206.50px;top:222.89px;font-size:12.3px;color:#262626;font-weight:400;-webkit-text-stroke:0.2px #262626;">S</div>
<div class="t" style="left:1270.50px;top:222.89px;font-size:12.3px;color:#262626;font-weight:400;-webkit-text-stroke:0.2px #262626;">T</div>
<div class="t" style="left:1334.50px;top:222.89px;font-size:12.3px;color:#262626;font-weight:400;-webkit-text-stroke:0.2px #262626;">U</div>
<div class="t" style="left:9.30px;top:243.34px;font-size:12px;color:#262626;font-weight:400;">1</div>
<div class="t" style="left:9.30px;top:262.34px;font-size:12px;color:#262626;font-weight:400;">2</div>
<div class="t" style="left:9.30px;top:281.34px;font-size:12px;color:#0e6b3a;font-weight:400;">3</div>
<div class="t" style="left:9.30px;top:300.34px;font-size:12px;color:#262626;font-weight:400;">4</div>
<div class="t" style="left:9.30px;top:319.34px;font-size:12px;color:#262626;font-weight:400;">5</div>
<div class="t" style="left:9.30px;top:338.34px;font-size:12px;color:#262626;font-weight:400;">6</div>
<div class="t" style="left:9.30px;top:357.34px;font-size:12px;color:#262626;font-weight:400;">7</div>
<div class="t" style="left:9.30px;top:376.34px;font-size:12px;color:#262626;font-weight:400;">8</div>
<div class="t" style="left:9.30px;top:395.34px;font-size:12px;color:#262626;font-weight:400;">9</div>
<div class="t" style="left:5.96px;top:414.34px;font-size:12px;color:#262626;font-weight:400;">10</div>
<div class="t" style="left:6.41px;top:433.34px;font-size:12px;color:#262626;font-weight:400;">11</div>
<div class="t" style="left:5.96px;top:452.34px;font-size:12px;color:#262626;font-weight:400;">12</div>
<div class="t" style="left:5.96px;top:471.34px;font-size:12px;color:#262626;font-weight:400;">13</div>
<div class="t" style="left:5.96px;top:490.34px;font-size:12px;color:#262626;font-weight:400;">14</div>
<div class="t" style="left:5.96px;top:509.34px;font-size:12px;color:#262626;font-weight:400;">15</div>
<div class="t" style="left:5.96px;top:528.34px;font-size:12px;color:#262626;font-weight:400;">16</div>
<div class="t" style="left:5.96px;top:547.34px;font-size:12px;color:#262626;font-weight:400;">17</div>
<div class="t" style="left:5.96px;top:566.34px;font-size:12px;color:#262626;font-weight:400;">18</div>
<div class="t" style="left:5.96px;top:585.34px;font-size:12px;color:#262626;font-weight:400;">19</div>
<div class="t" style="left:5.96px;top:604.34px;font-size:12px;color:#262626;font-weight:400;">20</div>
<div class="t" style="left:5.96px;top:623.34px;font-size:12px;color:#262626;font-weight:400;">21</div>
<div class="t" style="left:5.96px;top:642.34px;font-size:12px;color:#262626;font-weight:400;">22</div>
<div class="t" style="left:5.96px;top:661.34px;font-size:12px;color:#262626;font-weight:400;">23</div>
<div class="t" style="left:5.96px;top:680.34px;font-size:12px;color:#262626;font-weight:400;">24</div>
<div class="t" style="left:5.96px;top:699.34px;font-size:12px;color:#262626;font-weight:400;">25</div>
<div class="t" style="left:124.40px;top:719.70px;font-size:13px;color:#242424;font-weight:400;transform:scaleX(0.9909);transform-origin:0 0;-webkit-text-stroke:0.55px #242424;">Sheet1</div>
<div class="t" style="left:191.47px;top:722.47px;font-size:13.5px;color:#383838;font-weight:400;transform:scaleX(1.0294);transform-origin:0 0;">Income Statement</div>
<div class="t" style="left:334.30px;top:722.47px;font-size:13.5px;color:#383838;font-weight:400;transform:scaleX(1.0243);transform-origin:0 0;">Comparative Income Statement</div>
<div class="t" style="left:556.91px;top:722.47px;font-size:13.5px;color:#383838;font-weight:400;transform:scaleX(0.9889);transform-origin:0 0;">Balance Sheet</div>
<div class="t" style="left:11.30px;top:751.99px;font-size:11px;color:#262626;font-weight:400;transform:scaleX(0.9413);transform-origin:0 0;">Ready</div>
<div class="t" style="left:80.70px;top:750.77px;font-size:11.5px;color:#262626;font-weight:400;transform:scaleX(1.0061);transform-origin:0 0;-webkit-text-stroke:0.5px #262626;">Accessibility: Investigate</div>
<div class="t" style="left:965.60px;top:751.87px;font-size:11.5px;color:#262626;font-weight:400;transform:scaleX(0.9770);transform-origin:0 0;">Display Settings</div>
<div class="t" style="left:1331.90px;top:751.19px;font-size:11px;color:#262626;font-weight:400;transform:scaleX(0.9135);transform-origin:0 0;">100%</div>
</body></html>
